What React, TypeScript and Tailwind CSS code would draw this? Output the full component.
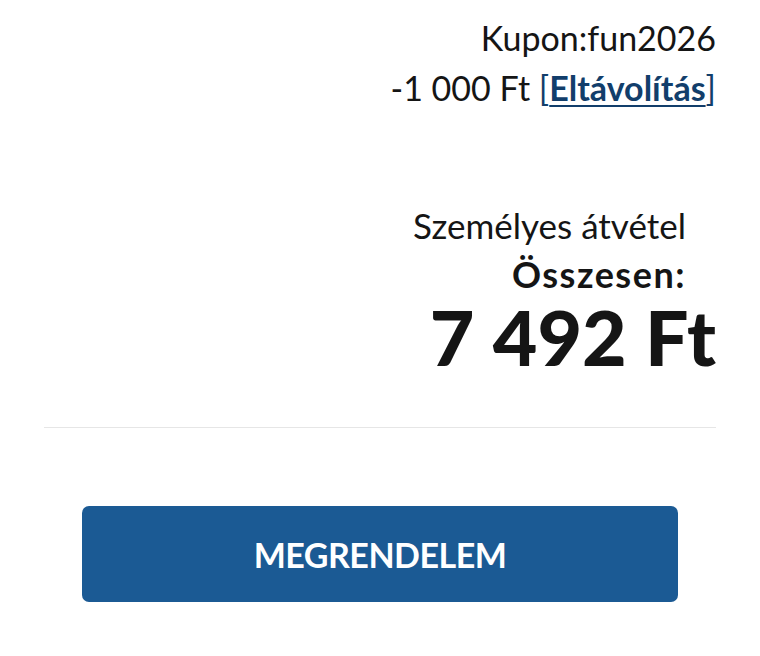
const font = { fontFamily: "Lato, 'Noto Sans', sans-serif" };

export default function App() {
  return (
    <div className="w-[760px] h-[656px] bg-white px-[44px] pt-[13px] text-[#151515]" style={font}>
      <div className="flex flex-col items-end text-[34px] leading-[50px]">
        <div>Kupon:fun2026</div>
        <div>
          -1 000 Ft{" "}
          <a href="#" className="text-[#123e6b]">
            [<span className="font-bold underline decoration-2 underline-offset-4">Eltávolítás</span>]
          </a>
        </div>
      </div>

      <div className="mt-[87px] flex flex-col items-end">
        <div className="pr-[30px] text-[35px] leading-[50px]">Személyes átvétel</div>
        <div className="pr-[30px] text-[36px] leading-[48px] font-bold tracking-[1.5px]">Összesen:</div>
        <div className="text-[77px] leading-[77px] font-black">7 492 Ft</div>
      </div>

      <div className="mt-[52px] border-t border-[#e6e6e6]" />

      <div className="mt-[78px] px-[38px]">
        <button className="w-full h-[96px] rounded-[7px] bg-[#1b5a94] text-white text-[34px] font-bold tracking-[-0.5px]">
          MEGRENDELEM
        </button>
      </div>
    </div>
  );
}
